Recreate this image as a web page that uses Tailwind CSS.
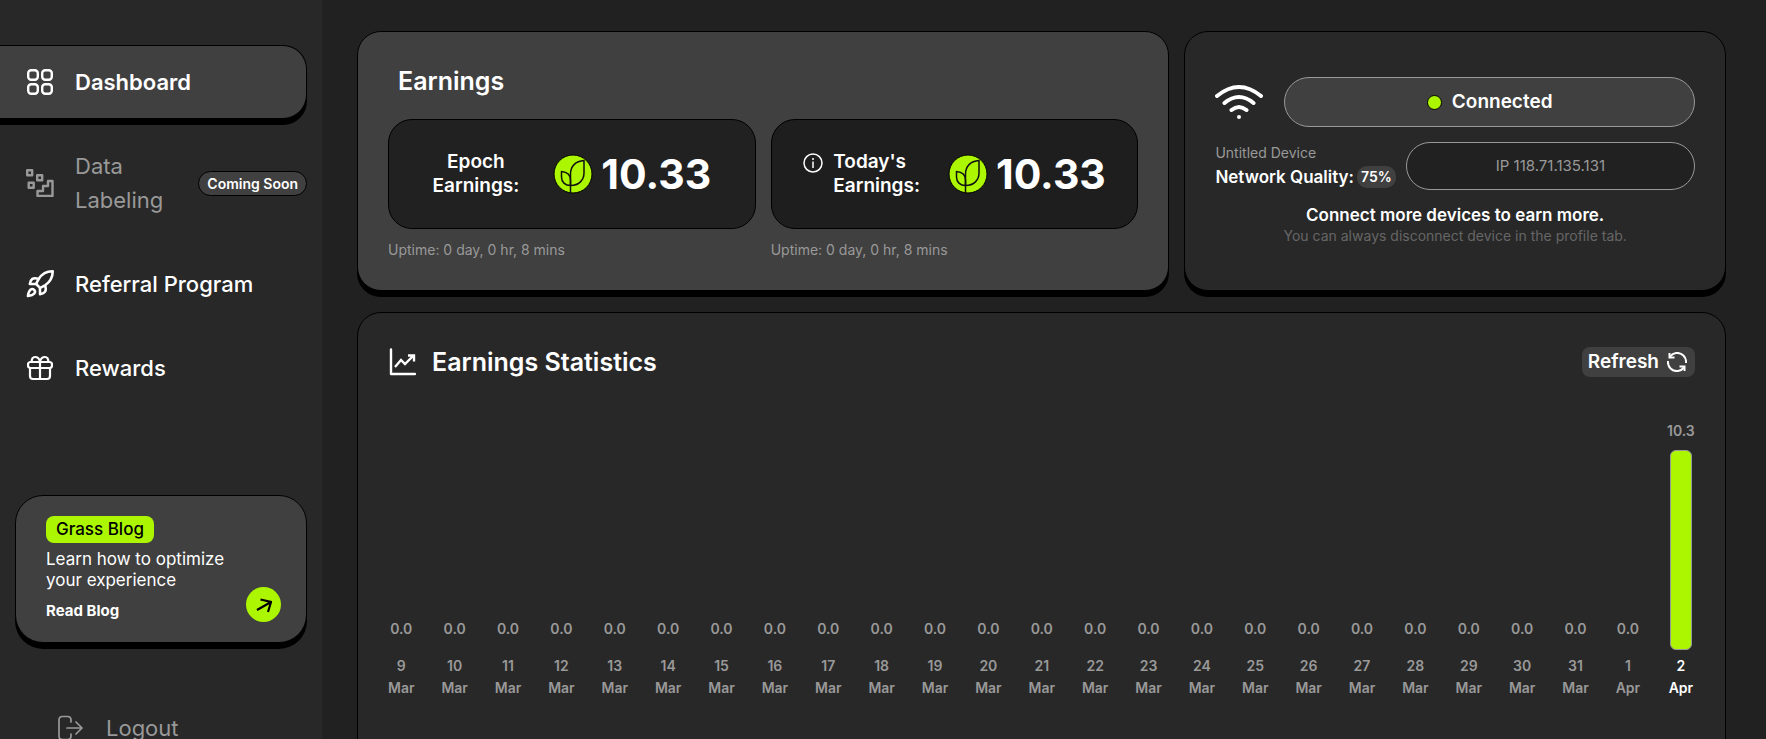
<!DOCTYPE html>
<html lang="en">
  <head>
    <meta charset="UTF-8" />
    <meta name="viewport" content="width=device-width, initial-scale=1.0" />
    <title>Grass Dashboard</title>
    <script src="https://cdn.jsdelivr.net/npm/@tailwindcss/browser@4"></script>
  </head>
  <body
    class="flex h-screen overflow-hidden bg-[#212121] font-['Inter','Noto_Sans',sans-serif] text-white"
  >
    <!-- Shared leaf coin -->
    <svg class="hidden">
      <symbol id="coin" viewBox="0 0 40 40">
        <circle cx="20" cy="20" r="19" fill="#abf600" stroke="#000" />
        <g fill="none" stroke="#111" stroke-width="1.5" stroke-linejoin="round">
          <path d="M31 6.5C22.5 7 17.5 12.5 17.5 20V31.5C26 31.5 31 26 31 19Z" />
          <path d="M8.5 17.5C14 18 17.5 21 17.5 26V31.5C12 31.5 8.5 28 8.5 23Z" />
          <path d="M17.5 31V39" />
        </g>
      </symbol>
    </svg>

    <!-- Sidebar -->
    <aside class="w-[322px] shrink-0 overflow-hidden bg-[#282828] pt-[45px]">
      <nav class="flex flex-col gap-2.5 pr-[15px] text-[22px] leading-[34px]">
        <a
          href="#"
          class="flex items-center gap-[22px] rounded-r-3xl border border-l-0 border-black bg-[#404040] py-[19px] pl-[27px] font-semibold shadow-[0_6px_0_#000]"
        >
          <svg class="size-[26px] shrink-0" viewBox="0 0 26 26" fill="none" stroke="currentColor" stroke-width="2.4">
            <rect x="1.2" y="1.2" width="9.6" height="9.6" rx="3" />
            <rect x="15.2" y="1.2" width="9.6" height="9.6" rx="3" />
            <rect x="1.2" y="15.2" width="9.6" height="9.6" rx="3" />
            <rect x="15.2" y="15.2" width="9.6" height="9.6" rx="3" />
          </svg>
          Dashboard
        </a>
        <a href="#" class="flex items-center gap-[21px] py-5 pl-[26px] text-[#999]">
          <svg class="size-7 shrink-0" viewBox="0 0 28 28" fill="none" stroke="currentColor" stroke-width="2.4" stroke-linejoin="round">
            <rect x="1.2" y="1.2" width="5" height="5" />
            <rect x="11.2" y="6.2" width="5" height="5" />
            <rect x="2.7" y="13.7" width="5" height="5" />
            <path d="M26.500 12H22V17H17V22H11.500V27H26.500Z" />
          </svg>
          <span class="flex-1">Data Labeling</span>
          <span
            class="rounded-full border border-black bg-[#404040] px-2 text-sm leading-[23px] font-semibold whitespace-nowrap text-white"
            >Coming Soon</span
          >
        </a>
        <a href="#" class="flex items-center gap-[21px] py-5 pl-[26px] font-medium">
          <svg class="size-7 shrink-0" viewBox="1 1 22 22" fill="none" stroke="currentColor" stroke-width="2" stroke-linejoin="round">
            <path d="M4.5 16.5c-1.5 1.26-2 5-2 5s3.74-.5 5-2c.71-.84.7-2.13-.09-2.91a2.18 2.18 0 0 0-2.91-.09z" />
            <path d="m12 15-3-3a22 22 0 0 1 2-3.95A12.88 12.88 0 0 1 22 2c0 2.72-.78 7.5-6 11a22.35 22.35 0 0 1-4 2z" />
            <path d="M9 12H4s.55-3.03 2-4c1.62-1.08 5 0 5 0" />
            <path d="M12 15v5s3.03-.55 4-2c1.08-1.62 0-5 0-5" />
          </svg>
          Referral Program
        </a>
        <a href="#" class="flex items-center gap-[22px] py-5 pl-[27px] font-medium">
          <svg class="size-[26px] shrink-0" viewBox="0 0 26 26" fill="none" stroke="currentColor" stroke-width="2.2">
            <rect x="1" y="7" width="24" height="6" rx="2.5" />
            <path d="M3 13V21Q3 24 6 24H20Q23 24 23 21V13M13 7V24" />
            <path d="M5 7C4 4 6 2 8 2C10.500 2 12.500 4 13 7C13.500 4 15.500 2 18 2C20 2 22 4 21 7" />
          </svg>
          Rewards
        </a>
      </nav>

      <!-- Blog card -->
      <div
        class="mx-[15px] mt-[90px] flex items-end justify-between rounded-[28px] border border-black bg-[#404040] pt-5 pr-[25px] pb-[19px] pl-[30px] shadow-[0_6px_0_#000]"
      >
        <div>
          <span class="inline-block rounded-lg bg-[#abf600] px-2.5 text-[17px] leading-[27px] font-medium text-black"
            >Grass Blog</span
          >
          <p class="mt-1.5 text-[17px] leading-[21px]">
            Learn how to optimize<br />your experience
          </p>
          <a href="#" class="mt-2 block text-[15px] leading-6 font-bold">Read Blog</a>
        </div>
        <a href="#" aria-label="Read Blog" class="mb-px flex size-[35px] shrink-0 items-center justify-center rounded-full bg-[#abf600] text-black">
          <svg class="size-4" viewBox="0 0 16 16" fill="none" stroke="currentColor" stroke-width="2.2">
            <path d="M1 13L15 5M4.500 2.500L15 5L12 15" />
          </svg>
        </a>
      </div>

      <button type="button" class="mt-[68px] ml-[57px] flex items-center gap-[23px] text-[22px] leading-[34px] text-[#999]">
        <svg class="size-[26px]" viewBox="0 0 26 26" fill="none" stroke="currentColor" stroke-width="1.7" stroke-linecap="round" stroke-linejoin="round">
          <path d="M14 7V5Q14 1.500 10.500 1.500H5.500Q2 1.500 2 5V21Q2 24.500 5.500 24.500H10.500Q14 24.500 14 21V19" />
          <path d="M10 13H25M19 7L25 13L19 19" />
        </svg>
        Logout
      </button>
    </aside>

    <!-- Main -->
    <main class="min-w-0 flex-1 pt-[31px] pr-10 pl-[35px]">
      <div class="grid grid-cols-[3fr_2fr] gap-[15px]">
        <!-- Earnings -->
        <section class="rounded-3xl border border-black bg-[#404040] px-[30px] pt-8 pb-[29px] shadow-[0_6px_0_#000]">
          <h2 class="pl-2.5 text-[25px] leading-[34px] font-semibold">Earnings</h2>
          <div class="mt-[21px] grid grid-cols-2 gap-x-[15px]">
            <div class="flex h-[110px] items-center justify-center gap-[34px] rounded-3xl border border-black bg-[#212121]">
              <div class="text-center text-[19px] leading-6 font-semibold">Epoch<br />Earnings:</div>
              <div class="flex items-center gap-2">
                <svg class="size-10"><use href="#coin" /></svg>
                <span class="text-[41px] leading-[48px] font-bold">10.33</span>
              </div>
            </div>
            <div class="flex h-[110px] items-center justify-center gap-7 rounded-3xl border border-black bg-[#1e1e1e]">
              <div class="flex gap-2.5">
                <svg class="mt-[3px] size-5" viewBox="0 0 20 20" fill="none" stroke="currentColor" stroke-width="1.5">
                  <circle cx="10" cy="10" r="9" />
                  <path d="M10 8.500V15M10 5V7" />
                </svg>
                <div class="text-[19px] leading-6 font-semibold">Today's<br />Earnings:</div>
              </div>
              <div class="flex items-center gap-2">
                <svg class="size-10"><use href="#coin" /></svg>
                <span class="text-[41px] leading-[48px] font-bold">10.33</span>
              </div>
            </div>
            <p class="mt-2.5 text-sm leading-[22px] text-[#999]">Uptime: 0 day, 0 hr, 8 mins</p>
            <p class="mt-2.5 text-sm leading-[22px] text-[#999]">Uptime: 0 day, 0 hr, 8 mins</p>
          </div>
        </section>

        <!-- Network -->
        <section class="flex flex-col rounded-3xl border border-black bg-[#282828] px-[30px] pt-[45px] shadow-[0_6px_0_#000]">
          <div class="flex items-center gap-[21px]">
            <svg class="h-9 w-12 shrink-0" viewBox="0 0 48 36" fill="none" stroke="currentColor" stroke-width="4" stroke-linecap="round">
              <path d="M2 12Q24 -6 46 12M9.500 19Q24 7 38.500 19M16.500 26Q24 20 31.500 26" />
              <circle cx="24" cy="33" r="2" fill="currentColor" stroke="none" />
            </svg>
            <div class="flex h-[50px] flex-1 items-center justify-center gap-2.5 rounded-full border border-[#999] bg-[#404040] text-[19px] font-semibold">
              <span class="size-[15px] rounded-full border border-black bg-[#abf600]"></span>
              Connected
            </div>
          </div>
          <div class="mt-[15px] flex items-center gap-2.5">
            <div>
              <p class="text-sm leading-[22px] text-[#999]">Untitled Device</p>
              <p class="flex items-center gap-[3px] text-[17px] leading-[26px] font-semibold whitespace-nowrap">
                Network Quality:
                <span class="rounded-[10px] bg-[#404040] px-1 text-sm leading-[22px]">75%</span>
              </p>
            </div>
            <div class="flex h-12 flex-1 items-center justify-center rounded-full border border-[#999] bg-[#212121] text-[15px] text-[#999]">
              IP 118.71.135.131
            </div>
          </div>
          <div class="mt-3.5 text-center">
            <p class="text-[17px] leading-[22px] font-semibold">Connect more devices to earn more.</p>
            <p class="text-sm leading-5 text-[#666]">You can always disconnect device in the profile tab.</p>
          </div>
        </section>
      </div>

      <!-- Statistics -->
      <section class="mt-[21px] h-screen rounded-3xl border border-black bg-[#282828] px-[30px] pt-[34px]">
        <div class="flex items-center justify-between">
          <h2 class="flex items-center gap-4 text-[25px] leading-[30px] font-semibold">
            <svg class="size-7" viewBox="0 0 28 28" fill="none" stroke="currentColor" stroke-width="2.4">
              <path d="M3 1.500V26H27" stroke-linecap="round" stroke-linejoin="round" />
              <path d="M7 19L13 12L17 16L25 8M20 7.500H26V13.500" />
            </svg>
            Earnings Statistics
          </h2>
          <button type="button" class="flex h-[30px] items-center gap-2 rounded-lg bg-[#404040] pr-2 pl-1.5 text-[19px] font-semibold">
            Refresh
            <svg class="size-5" viewBox="0 0 20 20" fill="none" stroke="currentColor" stroke-width="2">
              <path d="M1 9A9 9 0 0 0 11 19Q14.500 18.500 17 15.500M19 11A9 9 0 0 0 9 1Q5.500 1.500 3 4.500" />
              <path d="M2.500 1V5.500H7.500M17.500 19V14.500H12.500" />
            </svg>
          </button>
        </div>
        <div id="chart" class="mt-[43px] flex items-end justify-between text-center text-sm leading-[22px] font-semibold text-[#999]"></div>
      </section>
    </main>

    <script>
      const days = [];
      for (let d = 9; d <= 31; d++) days.push([d, "Mar", 0]);
      days.push([1, "Apr", 0], [2, "Apr", 10.3]);

      document.getElementById("chart").innerHTML = days
        .map(
          ([day, month, value]) => `
            <div class="flex flex-col items-center">
              <span>${value.toFixed(1)}</span>
              ${
                value
                  ? `<div class="mt-2 w-[22px] rounded-md border border-[#999] bg-[#abf600]" style="height: ${Math.round((value / 10.3) * 200)}px"></div>`
                  : `<div class="h-2.5"></div>`
              }
              <div class="mt-[5px] ${value ? "text-white" : ""}">${day}<br />${month}</div>
            </div>`
        )
        .join("");
    </script>
  </body>
</html>
